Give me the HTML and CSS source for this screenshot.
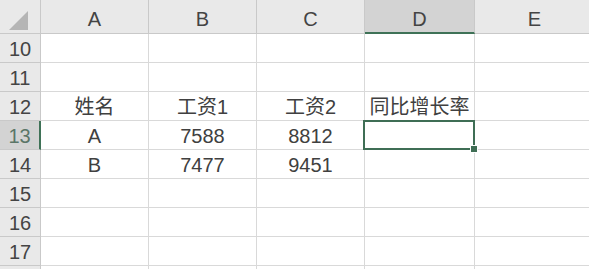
FILE: index.html
```html
<!DOCTYPE html>
<html lang="zh">
<head>
<meta charset="utf-8">
<link rel="stylesheet" href="styles.css">
</head>
<body>
<div class="sheet">
  <div class="hd corner"><span class="tri"></span></div>
  <div class="hd col">A</div>
  <div class="hd col">B</div>
  <div class="hd col">C</div>
  <div class="hd col sel-col">D</div>
  <div class="hd col">E</div>

  <div class="hd row">10</div>
  <div class="c"></div><div class="c"></div><div class="c"></div><div class="c"></div><div class="c"></div>

  <div class="hd row">11</div>
  <div class="c"></div><div class="c"></div><div class="c"></div><div class="c"></div><div class="c"></div>

  <div class="hd row">12</div>
  <div class="c">姓名</div><div class="c">工资1</div><div class="c">工资2</div><div class="c">同比增长率</div><div class="c"></div>

  <div class="hd row sel-row">13</div>
  <div class="c">A</div><div class="c">7588</div><div class="c">8812</div><div class="c active"><span class="handle"></span></div><div class="c"></div>

  <div class="hd row">14</div>
  <div class="c">B</div><div class="c">7477</div><div class="c">9451</div><div class="c"></div><div class="c"></div>

  <div class="hd row">15</div>
  <div class="c"></div><div class="c"></div><div class="c"></div><div class="c"></div><div class="c"></div>

  <div class="hd row">16</div>
  <div class="c"></div><div class="c"></div><div class="c"></div><div class="c"></div><div class="c"></div>

  <div class="hd row">17</div>
  <div class="c"></div><div class="c"></div><div class="c"></div><div class="c"></div><div class="c"></div>

  <div class="hd row"></div>
  <div class="c"></div><div class="c"></div><div class="c"></div><div class="c"></div><div class="c"></div>
</div>
</body>
</html>
```

FILE: styles.css
```css
html, body {
  margin: 0;
  padding: 0;
  background: #ffffff;
  overflow: hidden;
}

.sheet {
  display: grid;
  grid-template-columns: 41px 108px 108px 108px 110px 120px;
  grid-template-rows: 34px repeat(9, 29px);
  font-family: "Liberation Sans", "Noto Sans CJK SC", sans-serif;
  font-size: 20px;
  color: #404040;
}

.sheet > div {
  box-sizing: border-box;
  border-right: 1px solid #d9d9d9;
  border-bottom: 1px solid #d9d9d9;
  display: flex;
  align-items: flex-end;
  justify-content: center;
  padding-bottom: 2px;
  line-height: 22px;
  white-space: nowrap;
}

.sheet > .hd {
  background: #e9e9e9;
  border-color: #c9c9c9;
  color: #444444;
}

.sheet > .col {
  padding-bottom: 3px;
}

.corner {
  justify-content: flex-end;
  align-items: flex-end;
}

.sheet > .corner {
  padding: 0 4px 3px 0;
}

.tri {
  width: 0;
  height: 0;
  border-left: 19px solid transparent;
  border-bottom: 19px solid #b5b5b5;
}

.sheet > .sel-col {
  background: #d3d3d3;
  border-bottom: 2px solid #3f7257;
  padding-bottom: 2px;
}

.sheet > .sel-row {
  background: #d3d3d3;
  border-right: 2px solid #3f7257;
  color: #5b7668;
}

.active {
  position: relative;
}

.active::after {
  content: "";
  position: absolute;
  left: -2px;
  top: -1px;
  right: -1px;
  bottom: -1px;
  border: 2px solid #3f6e55;
}

.handle {
  position: absolute;
  right: -4px;
  bottom: -4px;
  width: 6px;
  height: 6px;
  background: #3f6e55;
  border: 1px solid #ffffff;
  z-index: 2;
}
```
